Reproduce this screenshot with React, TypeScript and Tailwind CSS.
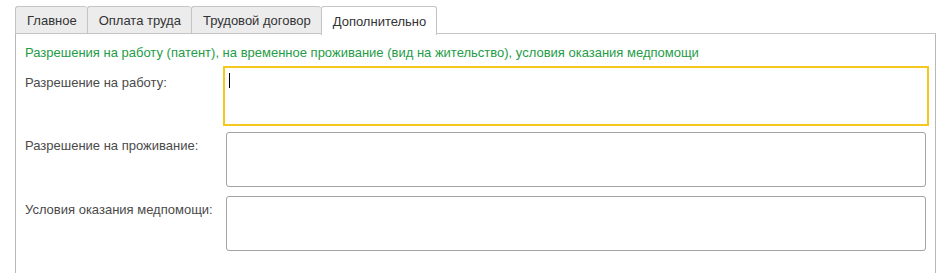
const tabs = ["Главное", "Оплата труда", "Трудовой договор"];

const fields = [
  { label: "Разрешение на работу:", focused: true },
  { label: "Разрешение на проживание:", focused: false },
  { label: "Условия оказания медпомощи:", focused: false },
];

export default function App() {
  return (
    <div className="h-[273px] w-[944px] bg-white pl-[15px] pr-[8px] pt-[6px] font-['Liberation_Sans',Arial,sans-serif] text-[13px] overflow-hidden">
      <div className="flex items-end">
        {tabs.map((t) => (
          <div
            key={t}
            className="h-[28px] border-l border-t border-b border-[#c4c4c4] bg-[#ececec] rounded-t-[3px] pl-[11px] pr-[10px] pt-[6px] leading-[15px] text-[#333]"
          >
            {t}
          </div>
        ))}
        <div className="h-[29px] border-l border-r border-t border-[#c4c4c4] bg-white rounded-t-[3px] pl-[11px] pr-[10px] pt-[7px] leading-[15px] text-[#333] relative z-10 -mb-px">
          Дополнительно
        </div>
        <div className="flex-1 h-[28px] border-b border-[#c4c4c4]" />
      </div>
      <div className="h-[240px] border-l border-r border-[#b8b8b8] pl-[9px] pr-[9px] pt-[11px]">
        <div className="leading-[15px] text-[#1e9c46]">
          Разрешения на работу (патент), на временное проживание (вид на жительство), условия оказания медпомощи
        </div>
        <div className="mt-[9px] flex flex-col gap-[9px]">
          {fields.map((f) => (
            <div key={f.label} className="flex">
              <div className="w-[201px] pt-[6px] leading-[15px] text-[#4a4a4a]">{f.label}</div>
              {f.focused ? (
                <div className="flex-1 h-[54px] border border-transparent outline-2 outline-solid outline-[#f6c81c] outline-offset-[1px] pl-[2px] pt-[3px]">
                  <div className="w-px h-[15px] bg-black" />
                </div>
              ) : (
                <div className="flex-1 h-[55px] border border-[#a3a3a3] rounded-[3px] bg-white" />
              )}
            </div>
          ))}
        </div>
      </div>
    </div>
  );
}
